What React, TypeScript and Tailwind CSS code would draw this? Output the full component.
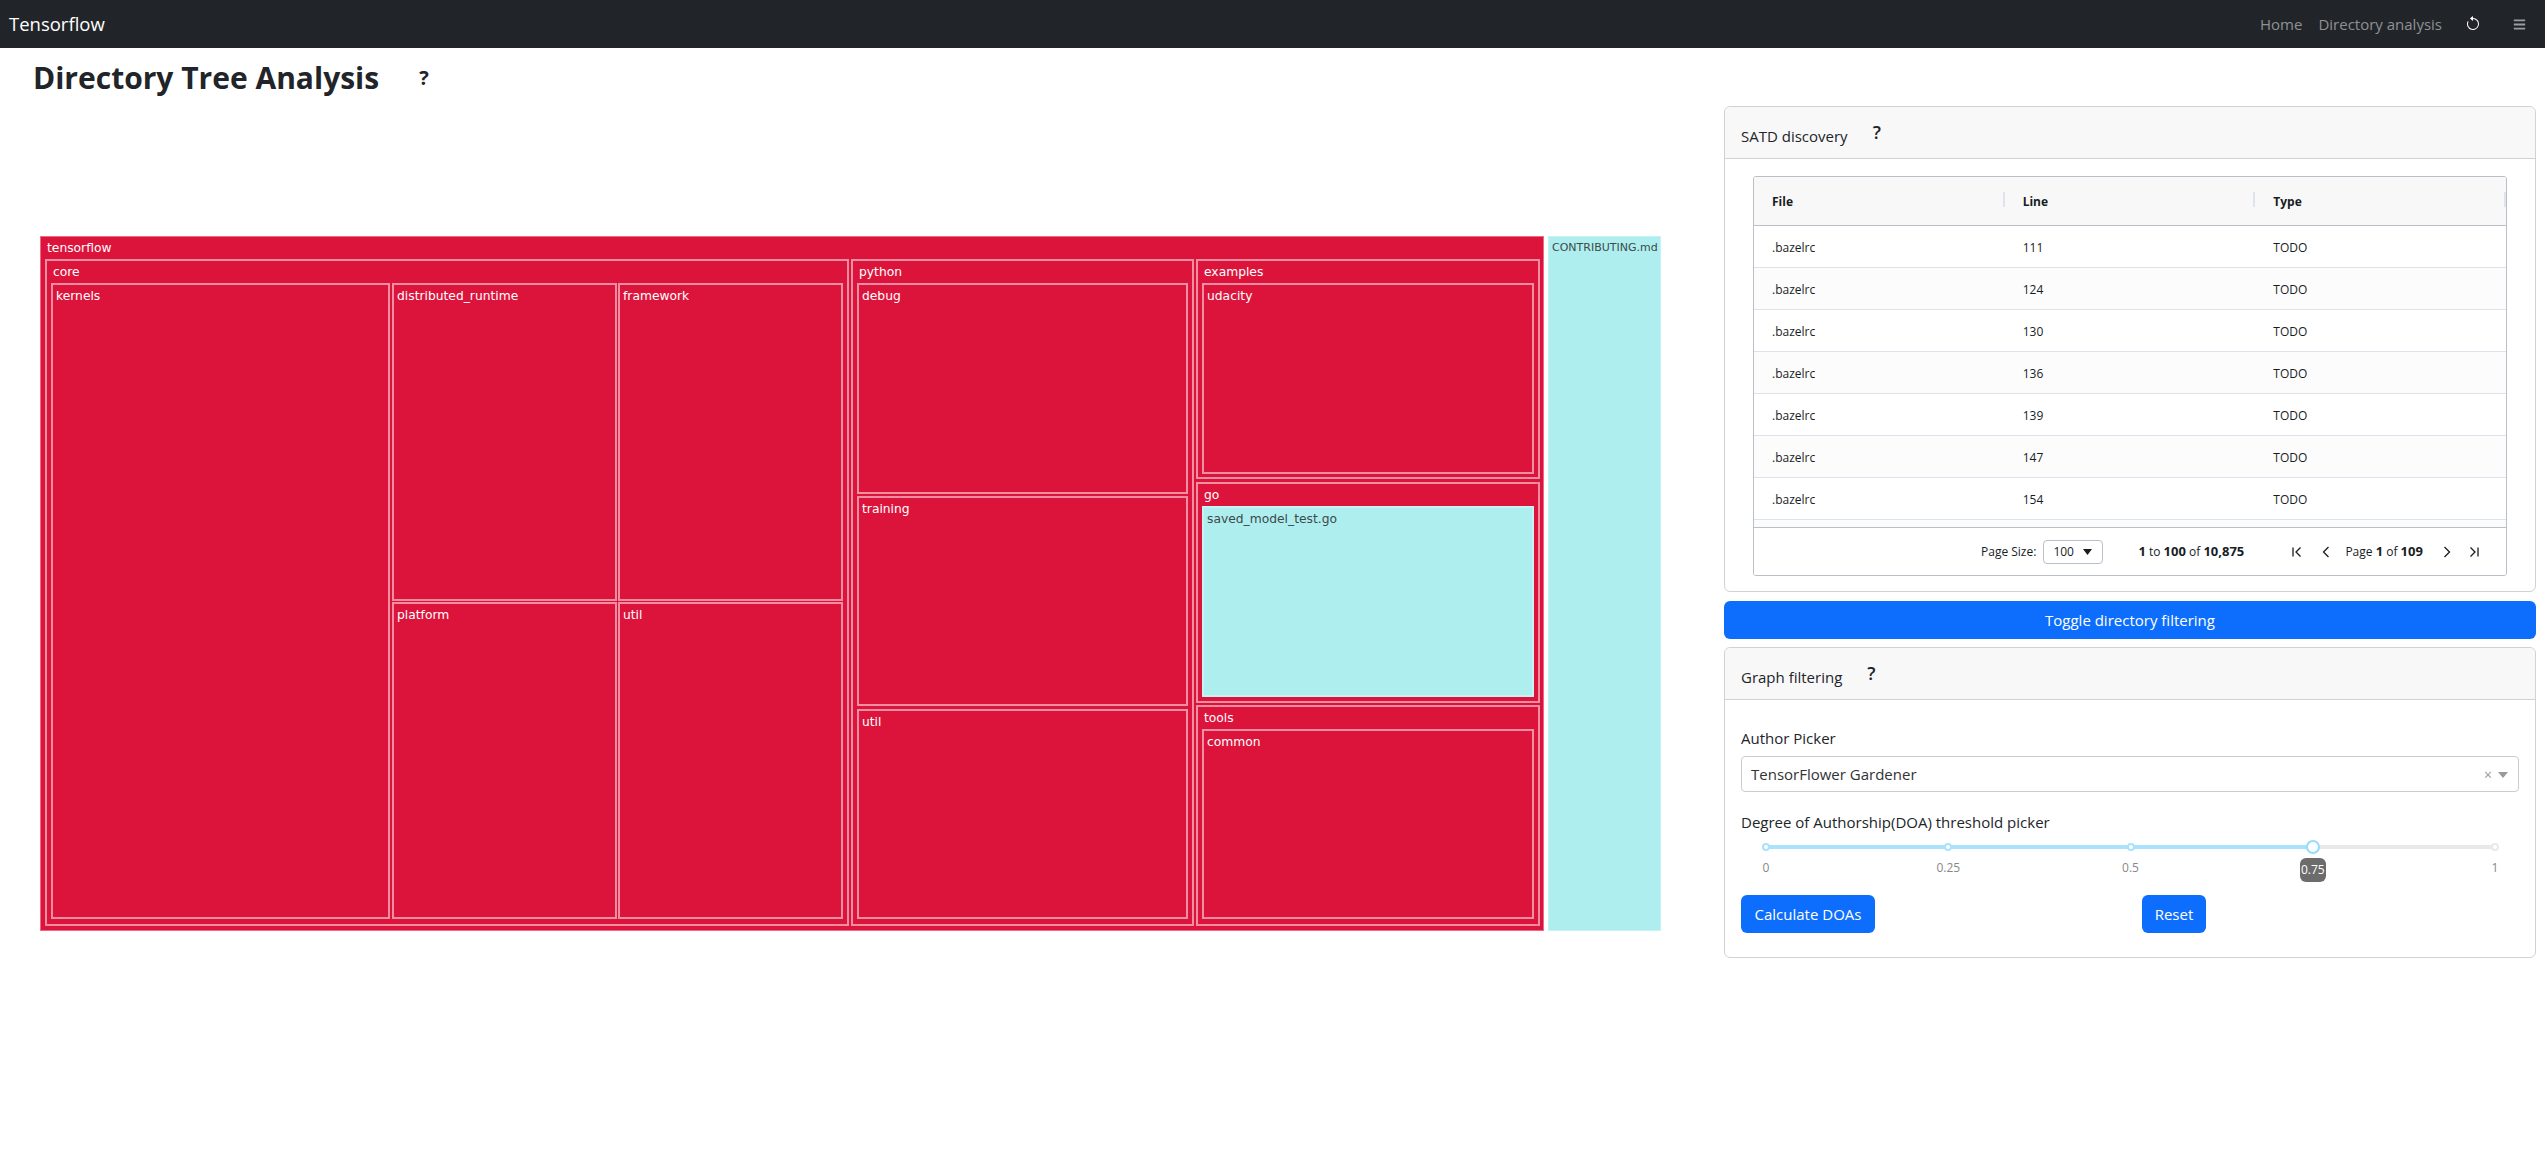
import type { ReactNode } from 'react'
import { BsArrowCounterclockwise } from 'react-icons/bs'
import { FaBars } from 'react-icons/fa'

const rows = [111, 124, 130, 136, 139, 147, 154]
const marks = [
  { label: '0', pos: 'left-[0%]' },
  { label: '0.25', pos: 'left-[25%]' },
  { label: '0.5', pos: 'left-[50%]' },
  { label: '1', pos: 'left-[100%]' },
]

/* treemap node with a label strip on top */
function Dir({ label, size, children }: { label: string; size: string; children: ReactNode }) {
  return (
    <div className={`${size} flex flex-col border-2 border-[#f18ea2] bg-[#dc143c]`}>
      <div className="h-[22px] shrink-0 pl-[6px] font-['DejaVu_Sans',sans-serif] text-[12.3px] leading-[22px] text-white">
        {label}
      </div>
      <div className="px-[4px]">{children}</div>
    </div>
  )
}

function Leaf({ label, size, file }: { label: string; size: string; file?: boolean }) {
  return (
    <div
      className={`${size} border-2 pl-[3px] font-['DejaVu_Sans',sans-serif] text-[12.3px] leading-[22px] ${
        file ? 'border-[#c5f3f3] bg-[#afeeee] text-[#3b4a4c]' : 'border-[#f18ea2] bg-[#dc143c] text-white'
      }`}
    >
      {label}
    </div>
  )
}

function Treemap() {
  return (
    <div className="mt-[139px] flex gap-[4px]">
      <div className="h-[695px] w-[1504px] border border-[#ee6a85] bg-[#dc143c]">
        <div className="h-[22px] pl-[6px] font-['DejaVu_Sans',sans-serif] text-[12.3px] leading-[22px] text-white">
          tensorflow
        </div>
        <div className="ml-[4px] flex">
          <Dir label="core" size="h-[667px] w-[804px]">
            <div className="flex">
              <Leaf label="kernels" size="h-[636px] w-[339px] shrink-0" />
              <div className="ml-[2px] flex w-[225px] shrink-0 flex-col gap-[1px]">
                <Leaf label="distributed_runtime" size="h-[318px]" />
                <Leaf label="platform" size="h-[317px]" />
              </div>
              <div className="ml-[1px] flex w-[225px] shrink-0 flex-col gap-[1px]">
                <Leaf label="framework" size="h-[318px]" />
                <Leaf label="util" size="h-[317px]" />
              </div>
            </div>
          </Dir>
          <div className="ml-[2px]">
            <Dir label="python" size="h-[667px] w-[343px]">
              <div className="flex flex-col gap-[2px]">
                <Leaf label="debug" size="h-[211px]" />
                <Leaf label="training" size="h-[210px]" />
                <Leaf label="util" size="mt-[1px] h-[210px]" />
              </div>
            </Dir>
          </div>
          <div className="ml-[2px] flex w-[344px] flex-col">
            <Dir label="examples" size="h-[220px]">
              <Leaf label="udacity" size="h-[191px]" />
            </Dir>
            <Dir label="go" size="mt-[3px] h-[221px]">
              <Leaf label="saved_model_test.go" size="h-[191px]" file />
            </Dir>
            <Dir label="tools" size="mt-[2px] h-[221px]">
              <Leaf label="common" size="h-[190px]" />
            </Dir>
          </div>
        </div>
      </div>
      <div className="h-[695px] w-[113px] border border-[#c5f3f3] bg-[#afeeee] pl-[3px] font-['DejaVu_Sans',sans-serif] text-[11px] leading-[22px] text-[#3b4a4c]">
        CONTRIBUTING.md
      </div>
    </div>
  )
}

function Pager() {
  return (
    <div className="flex h-[47px] items-center text-[12px] text-[#181d1f]">
      <span className="ml-[227px]">Page Size:</span>
      <div className="ml-[7px] flex h-[24px] w-[60px] items-center justify-between rounded-[4px] border border-[#babfc7] pl-[9px] pr-[10px]">
        100
        <svg width="9" height="6" viewBox="0 0 9 6">
          <path d="M0 0h9L4.5 6z" fill="#181d1f" />
        </svg>
      </div>
      <span className="ml-[35px] w-[110px] whitespace-nowrap">
        <b className="text-[13px]">1</b> to <b className="text-[13px]">100</b> of <b className="text-[13px]">10,875</b>
      </span>
      <svg className="ml-[43px]" width="12" height="12" viewBox="0 0 12 12" fill="none" stroke="#181d1f" strokeWidth="1.3">
        <path d="M2 1.5v9M9.5 1.5L5 6l4.5 4.5" />
      </svg>
      <svg className="ml-[17px]" width="12" height="12" viewBox="0 0 12 12" fill="none" stroke="#181d1f" strokeWidth="1.3">
        <path d="M8.5 1L3.5 6l5 5" />
      </svg>
      <span className="ml-[13px] w-[81px] whitespace-nowrap">
        Page <b className="text-[13px]">1</b> of <b className="text-[13px]">109</b>
      </span>
      <svg className="ml-[15px]" width="12" height="12" viewBox="0 0 12 12" fill="none" stroke="#181d1f" strokeWidth="1.3">
        <path d="M3.5 1l5 5-5 5" />
      </svg>
      <svg className="ml-[15px]" width="12" height="12" viewBox="0 0 12 12" fill="none" stroke="#181d1f" strokeWidth="1.3">
        <path d="M2.5 1.5L7 6l-4.5 4.5M10 1.5v9" />
      </svg>
    </div>
  )
}

function Grid() {
  return (
    <div className="mx-[28px] mt-[17px] overflow-hidden rounded-[3px] border border-[#babfc7] text-[12px] text-[#181d1f]">
      <div className="flex h-[49px] items-center border-b border-[#babfc7] bg-[#f8f8f8] pt-[1px] font-bold">
        {['File', 'Line', 'Type'].map((h) => (
          <div key={h} className="relative w-[251px] pl-[18px]">
            {h}
            <span className="absolute right-0 top-[-1px] h-[15px] w-[2px] bg-[#dfe3ea]" />
          </div>
        ))}
      </div>
      <div className="h-[301px] overflow-hidden bg-[#fcfcfc]">
        {rows.map((line, i) => (
          <div
            key={line}
            className={`flex h-[42px] items-center border-b border-[#dde2eb] pt-[2px] ${i % 2 ? 'bg-[#fcfcfc]' : 'bg-white'}`}
          >
            <div className="w-[251px] pl-[18px]">.bazelrc</div>
            <div className="w-[251px] pl-[18px]">{line}</div>
            <div className="w-[251px] pl-[18px]">TODO</div>
          </div>
        ))}
      </div>
      <div className="border-t border-[#babfc7] bg-white">
        <Pager />
      </div>
    </div>
  )
}

function CardHeader({ title, gap }: { title: string; gap: string }) {
  return (
    <div className="flex h-[52px] items-center border-b border-[#d2d2d2] bg-[#f8f8f8] px-[16px] pt-[7px]">
      {title}
      <span className={`${gap} -translate-y-[4px] text-[18px] font-semibold`}>?</span>
    </div>
  )
}

function AuthorSlider() {
  return (
    <div className="relative ml-[25px] mt-[6px] h-[55px] w-[729px]">
      <div className="absolute left-0 top-[5px] h-[4px] w-full rounded bg-[#e9e9e9]" />
      <div className="absolute left-0 top-[5px] h-[4px] w-[75%] bg-[#abe2fb]" />
      {marks.map((m) => (
        <span key={m.label}>
          <span
            className={`absolute top-[3px] h-[8px] w-[8px] -translate-x-1/2 rounded-full border-2 bg-white ${m.pos} ${
              m.label === '1' ? 'border-[#e9e9e9]' : 'border-[#abe2fb]'
            }`}
          />
          <span className={`absolute top-[19px] -translate-x-1/2 text-[12px] leading-[18px] text-[#888] ${m.pos}`}>
            {m.label}
          </span>
        </span>
      ))}
      <span className="absolute left-[75%] top-0 h-[14px] w-[14px] -translate-x-1/2 rounded-full border-2 border-[#96dbfa] bg-white" />
      <span className="absolute left-[75%] top-[18px] flex h-[24px] w-[26px] -translate-x-1/2 items-center justify-center rounded-[6px] bg-[#6c6c6c] text-[12px] text-white">
        0.75
      </span>
    </div>
  )
}

export default function App() {
  return (
    <div className="min-h-[1151px] bg-white font-['Open_Sans',sans-serif] text-[15px] text-[#212529]">
      <nav className="flex h-[48px] items-center bg-[#212529]">
        <span className="ml-[9px] text-[18.5px] text-white">Tensorflow</span>
        <div className="ml-auto flex items-center text-[#8f9193]">
          <span>Home</span>
          <span className="ml-[16px]">Directory analysis</span>
          <BsArrowCounterclockwise className="ml-[23px] text-[16px] text-white" />
          <FaBars className="ml-[32px] mr-[19px] text-[13px] text-[#9a9da0]" />
        </div>
      </nav>
      <div className="flex">
        <div className="w-[1724px] pl-[40px]">
          <div className="-ml-[7px] flex items-center pt-[11px]">
            <h1 className="text-[30px] font-bold leading-[38px]">Directory Tree Analysis</h1>
            <span className="ml-[40px] text-[20px] font-bold">?</span>
          </div>
          <Treemap />
        </div>
        <div className="w-[812px] pt-[58px]">
          <div className="h-[486px] rounded-[6px] border border-[#d2d2d2]">
            <div className="overflow-hidden rounded-t-[6px]">
              <CardHeader title="SATD discovery" gap="ml-[25px]" />
            </div>
            <Grid />
          </div>
          <button className="mt-[9px] h-[38px] w-full rounded-[6px] bg-[#0d6efd] text-white">
            Toggle directory filtering
          </button>
          <div className="mt-[8px] h-[311px] rounded-[6px] border border-[#d2d2d2]">
            <div className="overflow-hidden rounded-t-[6px]">
              <CardHeader title="Graph filtering" gap="ml-[25px]" />
            </div>
            <div className="px-[16px] pt-[26px]">
              <div className="leading-[24px]">Author Picker</div>
              <div className="mt-[6px] flex h-[36px] items-center rounded-[4px] border border-[#ccc] pl-[9px] pr-[10px] text-[#333]">
                TensorFlower Gardener
                <span className="ml-auto text-[14px] text-[#999]">×</span>
                <svg className="ml-[6px] mt-[2px]" width="10" height="6" viewBox="0 0 10 6">
                  <path d="M0 0h10L5 6z" fill="#999" />
                </svg>
              </div>
              <div className="mt-[18px] leading-[24px]">Degree of Authorship(DOA) threshold picker</div>
              <AuthorSlider />
              <div className="flex">
                <button className="h-[38px] w-[134px] rounded-[6px] bg-[#0d6efd] text-white">Calculate DOAs</button>
                <button className="ml-[267px] h-[38px] w-[64px] rounded-[6px] bg-[#0d6efd] text-white">Reset</button>
              </div>
            </div>
          </div>
        </div>
      </div>
    </div>
  )
}
